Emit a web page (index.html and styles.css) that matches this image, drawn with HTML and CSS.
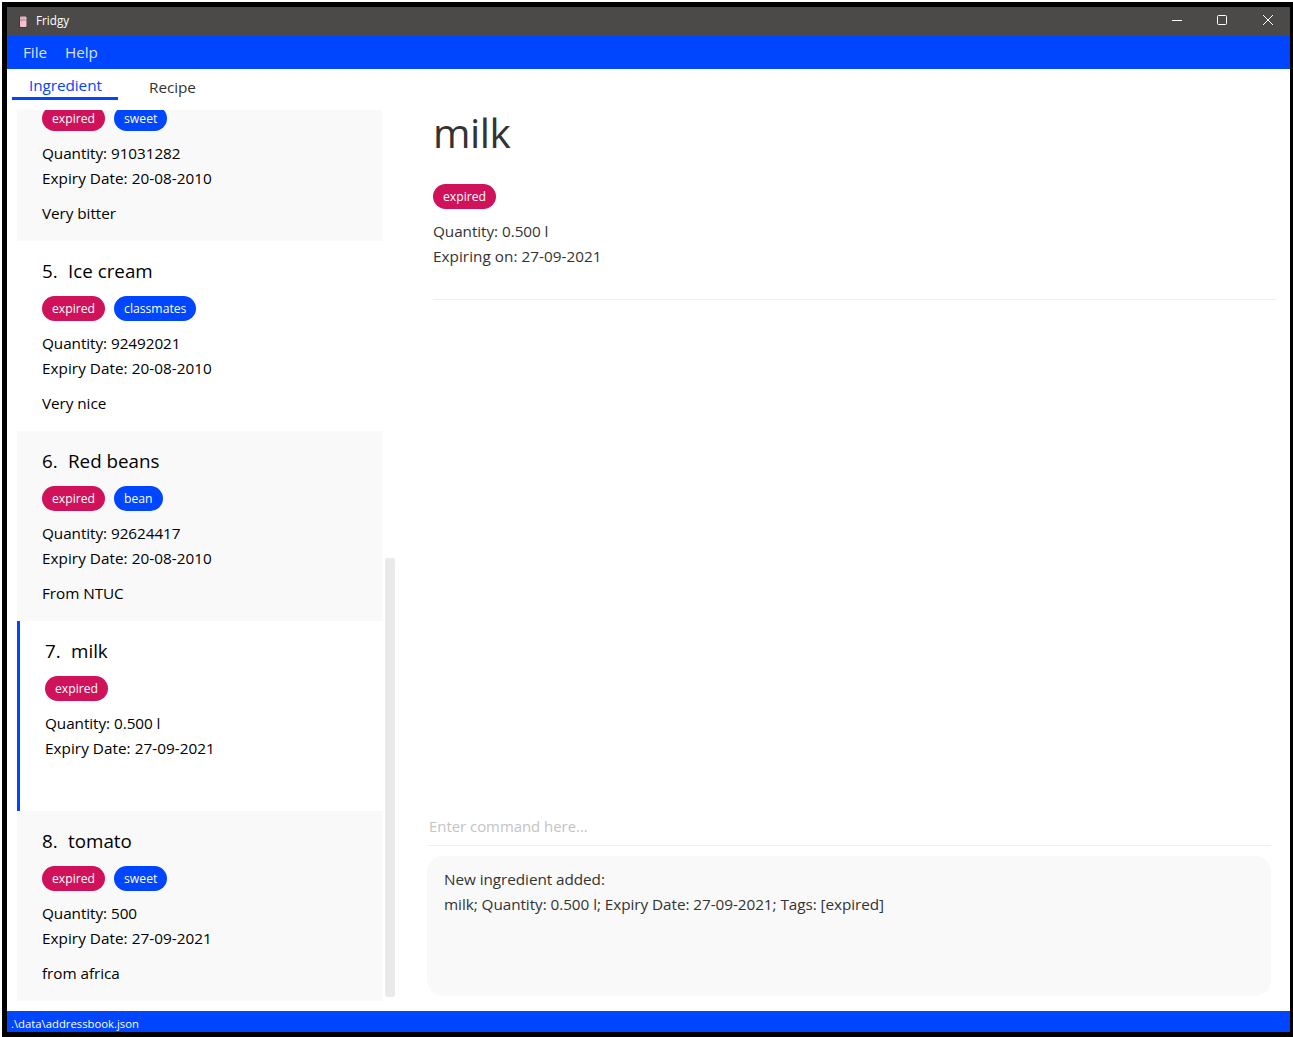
FILE: index.html
```
<!DOCTYPE html>
<html lang="en">
<head>
<meta charset="utf-8">
<title>Fridgy</title>
<link rel="stylesheet" href="styles.css">
</head>
<body>
<div class="window">
  <header class="titlebar">
    <svg class="app-icon" width="10" height="14" viewBox="0 0 10 14"><rect x="1" y="1" width="8" height="12" rx="1" fill="#3d3a3b"/><rect x="2" y="1.500" width="6.500" height="10.500" rx="1" fill="#f8c3cf"/><path d="M2 5h6.500" stroke="#a47c86"/><path d="M3 3h4" stroke="#cf9ba8"/><path d="M3.500 6v1.500" stroke="#cf9ba8"/></svg>
    <span class="app-name">Fridgy</span>
    <div class="controls">
      <svg width="10" height="10" viewBox="0 0 10 10"><path d="M0 5.500h10"/></svg>
      <svg width="10" height="10" viewBox="0 0 10 10"><rect x=".5" y=".5" width="9" height="9" rx="1"/></svg>
      <svg class="close" width="10" height="10" viewBox="0 0 10 10"><path d="M0 0l10 10M10 0L0 10"/></svg>
    </div>
  </header>
  <nav class="menubar"><span>File</span><span>Help</span></nav>
  <main class="content">
    <section class="sidebar">
      <div class="tabs"><div class="tab active">Ingredient</div><div class="tab">Recipe</div></div>
      <div class="list-wrap">
        <div class="list">
          <article class="card shaded scrolled">
            <div class="tags"><span class="tag expired">expired</span><span class="tag">sweet</span></div>
            <div class="facts"><p>Quantity: 91031282</p><p class="date">Expiry Date: 20-08-2010</p></div>
            <p class="note">Very bitter</p>
          </article>
          <article class="card">
            <h2><span>5.</span>Ice cream</h2>
            <div class="tags"><span class="tag expired">expired</span><span class="tag">classmates</span></div>
            <div class="facts"><p>Quantity: 92492021</p><p class="date">Expiry Date: 20-08-2010</p></div>
            <p class="note">Very nice</p>
          </article>
          <article class="card shaded">
            <h2><span>6.</span>Red beans</h2>
            <div class="tags"><span class="tag expired">expired</span><span class="tag">bean</span></div>
            <div class="facts"><p>Quantity: 92624417</p><p class="date">Expiry Date: 20-08-2010</p></div>
            <p class="note">From NTUC</p>
          </article>
          <article class="card selected">
            <h2><span>7.</span>milk</h2>
            <div class="tags"><span class="tag expired">expired</span></div>
            <div class="facts"><p>Quantity: 0.500 l</p><p class="date">Expiry Date: 27-09-2021</p></div>
            <p class="note"></p>
          </article>
          <article class="card shaded">
            <h2><span>8.</span>tomato</h2>
            <div class="tags"><span class="tag expired">expired</span><span class="tag">sweet</span></div>
            <div class="facts"><p>Quantity: 500</p><p class="date">Expiry Date: 27-09-2021</p></div>
            <p class="note">from africa</p>
          </article>
        </div>
        <div class="scrollbar"><div class="thumb"></div></div>
      </div>
    </section>
    <section class="main">
      <div class="detail">
        <h1>milk</h1>
        <div class="tags"><span class="tag expired">expired</span></div>
        <div class="facts"><p>Quantity: 0.500 l</p><p class="date">Expiring on: 27-09-2021</p></div>
      </div>
      <div class="command">Enter command here...</div>
      <div class="result"><p>New ingredient added:</p><p>milk; Quantity: 0.500 l; Expiry Date: 27-09-2021; Tags: [expired]</p></div>
    </section>
  </main>
  <footer class="statusbar">.\data\addressbook.json</footer>
</div>
</body>
</html>
```
FILE: styles.css
```
* { box-sizing: border-box; }
body {
  margin: 0;
  height: 1037px;
  padding: 2px 0 0 2px;
  background: #fff;
  overflow: hidden;
  font: 15.3px/25px "Open Sans", "Noto Sans", sans-serif;
  letter-spacing: -.06px;
  color: #000;
}
h1, h2, p { margin: 0; font-weight: 400; }
.window {
  display: flex;
  flex-direction: column;
  width: 1291px;
  height: 1035px;
  border: 5px solid #000;
  border-right-width: 3px;
  background: #fff;
}

.titlebar {
  display: flex;
  align-items: center;
  height: 29px;
  padding: 0 17px 0 11px;
  background: #4c4a48;
  color: #fff;
  font-size: 11.700px;
  letter-spacing: 0;
}
.app-icon { margin-right: 8px; }
.app-name { line-height: 27px; height: 29px; }
.controls { display: flex; gap: 35px; margin-left: auto; padding-bottom: 3px; }
.controls svg { fill: none; stroke: #fff; overflow: visible; }
.controls .close { margin-left: 1px; }

.menubar {
  display: flex;
  gap: 18px;
  height: 33px;
  padding: 0 16px;
  background: #0045ff;
  color: #d9e3ff;
  line-height: 33px;
}

.content { display: flex; flex: 1; min-height: 0; }
.sidebar { display: flex; flex-direction: column; width: 391px; }
.tabs { display: flex; height: 41px; padding-left: 5px; gap: 14px; color: #333; }
.tab { height: 31px; padding: 0 17px; line-height: 37px; }
.tab.active { width: 106px; border-bottom: 3px solid #0045ff; color: #0045ff; line-height: 33px; }

.list-wrap { display: flex; gap: 3px; height: 891px; padding-left: 10px; }
.list {
  display: flex;
  flex-direction: column;
  justify-content: flex-end;
  width: 365px;
  overflow: hidden;
}
.card {
  display: flex;
  flex: none;
  flex-direction: column;
  gap: 10px;
  height: 190px;
  padding: 15px 25px;
}
.card.shaded { background: #f9f9f9; }
.card.selected { border-left: 3px solid #0045ff; }
.card.scrolled { height: 131px; padding-top: 0; }
.card.scrolled .tags { margin-top: -4px; }
.card h2 { display: flex; height: 30px; font-size: 18.800px; line-height: 30px; letter-spacing: 0; }
.card h2 span { width: 26px; }
.note { height: 25px; }
.date { letter-spacing: .03px; }

.tags { display: flex; gap: 9px; }
.tag {
  height: 25px;
  padding: 0 10px;
  border-radius: 13px;
  background: #0045ff;
  color: #fff;
  font-size: 12.200px;
  letter-spacing: 0;
}
.tag.expired { background: #d0125b; }

.scrollbar { display: flex; align-items: flex-end; width: 10px; padding-bottom: 4px; }
.thumb { width: 10px; height: 439px; border-radius: 3px; background: #eaeaea; }

.main { display: flex; flex: 1; flex-direction: column; padding: 30px 14px 15px 29px; }
.detail {
  display: flex;
  flex-direction: column;
  gap: 10px;
  height: 201px;
  margin-left: 6px;
  border-bottom: 1px solid #eeeef6;
  color: #333;
}
.detail h1 { height: 75px; font-size: 40.500px; line-height: 68px; letter-spacing: -.5px; }
.command {
  height: 38px;
  margin: auto 5px 10px 0;
  padding-left: 2px;
  border-bottom: 1px solid #eeeef6;
  color: #c4c4c4;
  font-size: 14.900px;
  line-height: 36px;
  letter-spacing: 0;
}
.result {
  height: 140px;
  margin-right: 5px;
  padding: 11px 17px;
  border-radius: 16px;
  background: #f9f9f9;
  color: #333;
}

.statusbar {
  height: 21px;
  padding-left: 4px;
  background: #0045ff;
  color: #fff;
  font-size: 11.300px;
  line-height: 25px;
  letter-spacing: 0;
}
```
